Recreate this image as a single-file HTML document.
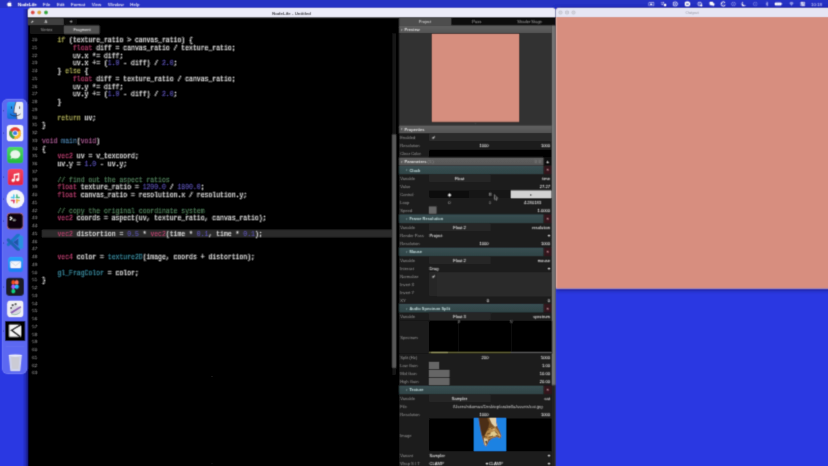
<!DOCTYPE html>
<html><head><meta charset="utf-8"><title>NodeLife</title>
<style>
html,body{margin:0;padding:0;}
html{width:828px;height:466px;overflow:hidden;background:#2b38e2;}
body{width:828px;height:466px;overflow:hidden;background:#2b38e2;position:relative;font-family:"Liberation Sans",sans-serif;}
#clip{position:absolute;left:0;top:0;width:828px;height:466px;overflow:hidden;}
#wrap{position:absolute;left:-20px;top:-20px;width:868px;height:506px;overflow:hidden;background:#2b38e2;filter:url(#cm);}
#root{position:absolute;left:20px;top:20px;width:3312px;height:1864px;transform:scale(0.25);transform-origin:0 0;}
.k{color:#b9b860}.t{color:#b9426f}.v{color:#a85c92}.n{color:#5c54b2}.c{color:#578560}.f{color:#4f86b0}.b{color:#3f8fa3}.w{color:#e0e0e0}
.ln{position:absolute;left:112px;width:36.4px;text-align:right;font-family:"Liberation Sans",sans-serif;font-size:17.2px;color:#9c9c9c;height:32px;line-height:32px;}
.cl{position:absolute;left:168px;font-family:"Liberation Mono",monospace;font-size:25.8px;color:#e6e6e6;height:32px;line-height:32px;white-space:pre;-webkit-text-stroke:0.24px currentColor;}
</style></head><body><svg width="0" height="0" style="position:absolute"><defs><filter id="cm" x="0" y="0" width="100%" height="100%"><feConvolveMatrix order="3" kernelMatrix="0.0196 0.1008 0.0196 0.1008 0.5184 0.1008 0.0196 0.1008 0.0196" edgeMode="duplicate" preserveAlpha="true"/></filter></defs></svg><div id="clip"><div id="wrap"><div id="root">

<div style="position:absolute;left:-80px;top:-80px;width:3472px;height:112.4px;background:#2530c4;"></div>
<svg style="position:absolute;left:28px;top:4.8px" width="20" height="22.4" viewBox="0 0 10 12"><path d="M7 3.2c-1 0-1.4.5-2.1.5S3.700 3.200 2.900 3.200C1.600 3.200.3 4.400.3 6.500.3 8.700 1.800 11.300 3 11.300c.7 0 .9-.45 1.900-.45s1.100.45 1.900.45c1.200 0 2.400-2.200 2.700-3.300-1.700-.7-1.900-3.200-.1-4C8.800 3.400 7.800 3.200 7 3.200zM6.700.2C5.600.3 4.600 1.400 4.800 2.700 5.900 2.700 6.900 1.600 6.700.2z" fill="#fff"/></svg>
<div style="position:absolute;left:72px;top:-1.6px;height:40px;line-height:40px;font-family:'Liberation Sans', sans-serif;font-size:17.6px;color:#fff;font-weight:bold;white-space:pre;">NodeLife</div>
<div style="position:absolute;left:172px;top:-1.6px;height:40px;line-height:40px;font-family:'Liberation Sans', sans-serif;font-size:17.6px;color:#fff;font-weight:normal;white-space:pre;">File</div>
<div style="position:absolute;left:228px;top:-1.6px;height:40px;line-height:40px;font-family:'Liberation Sans', sans-serif;font-size:17.6px;color:#fff;font-weight:normal;white-space:pre;">Edit</div>
<div style="position:absolute;left:284px;top:-1.6px;height:40px;line-height:40px;font-family:'Liberation Sans', sans-serif;font-size:17.6px;color:#fff;font-weight:normal;white-space:pre;">Format</div>
<div style="position:absolute;left:366.8px;top:-1.6px;height:40px;line-height:40px;font-family:'Liberation Sans', sans-serif;font-size:17.6px;color:#fff;font-weight:normal;white-space:pre;">View</div>
<div style="position:absolute;left:432px;top:-1.6px;height:40px;line-height:40px;font-family:'Liberation Sans', sans-serif;font-size:17.6px;color:#fff;font-weight:normal;white-space:pre;">Window</div>
<div style="position:absolute;left:521.2px;top:-1.6px;height:40px;line-height:40px;font-family:'Liberation Sans', sans-serif;font-size:17.6px;color:#fff;font-weight:normal;white-space:pre;">Help</div>
<div style="position:absolute;right:24px;top:-1.6px;height:40px;line-height:40px;font-family:'Liberation Sans', sans-serif;font-size:17.6px;color:#d4d8fa;font-weight:normal;white-space:pre;">10:18</div>
<svg style="position:absolute;left:2592.79px;top:7.552px" width="24.816" height="17.296" viewBox="0 0 66 46"><rect x="4" y="4" width="58" height="38" rx="9" fill="none" stroke="#e8eaff" stroke-width="6"/><rect x="20" y="15" width="20" height="16" rx="3" fill="#e8eaff"/><path d="M44 23l10-7v14z" fill="#e8eaff"/></svg>
<svg style="position:absolute;left:2642.4px;top:6.2px" width="24" height="20" viewBox="0 0 60 50"><path d="M2 14h30M24 6l9 8-9 8" fill="none" stroke="#e8eaff" stroke-width="6"/><path d="M10 30h16" stroke="#e8eaff" stroke-width="6"/><rect x="36" y="26" width="20" height="20" rx="3" fill="#fff"/></svg>
<svg style="position:absolute;left:2690.4px;top:5.4px" width="21.6" height="21.6" viewBox="0 0 54 54"><circle cx="27" cy="27" r="21" fill="none" stroke="#e4e6ff" stroke-width="9"/><circle cx="27" cy="27" r="8" fill="#e4e6ff"/></svg>
<svg style="position:absolute;left:2738.8px;top:5.4px" width="21.6" height="21.6" viewBox="0 0 60 60"><circle cx="30" cy="30" r="29" fill="#fff"/><rect x="17" y="21" width="26" height="18" rx="6" fill="#2a34b8"/><rect x="23" y="26" width="14" height="8" rx="3" fill="#dfe2ff"/></svg>
<svg style="position:absolute;left:2788.84px;top:5.784px" width="22.32" height="20.832" viewBox="0 0 60 56"><circle cx="26" cy="26" r="20" fill="none" stroke="#dcdffd" stroke-width="8"/><path d="M14 26h24M26 8c-10 10-10 26 0 36" fill="none" stroke="#dcdffd" stroke-width="4"/><circle cx="44" cy="42" r="11" fill="#fff"/></svg>
<svg style="position:absolute;left:2837.2px;top:7.2px" width="21.6" height="18" viewBox="0 0 60 50"><rect x="2" y="2" width="40" height="30" rx="8" fill="#fff"/><rect x="20" y="16" width="38" height="26" rx="8" fill="#fff"/><path d="M8 30l-2 14 14-12zM48 40l6 9-14-8z" fill="#fff"/></svg>
<svg style="position:absolute;left:2882.4px;top:5px" width="22.4" height="22.4" viewBox="0 0 56 56"><path d="M44 12A22 22 0 1 0 48 38" fill="none" stroke="#fff" stroke-width="10"/><circle cx="28" cy="28" r="6" fill="#c8ccff" opacity=".5"/></svg>
<svg style="position:absolute;left:2923.6px;top:6.2px" width="20" height="20" viewBox="0 0 50 50"><circle cx="25" cy="25" r="19" fill="none" stroke="#8f97ec" stroke-width="7"/><circle cx="25" cy="25" r="6" fill="#8f97ec"/></svg>
<svg style="position:absolute;left:2965.2px;top:5.8px" width="20" height="20.8" viewBox="0 0 50 52"><path d="M20 3A23 23 0 1 0 47 34 19 19 0 0 1 20 3z" fill="#fff"/></svg>
<svg style="position:absolute;left:3010.8px;top:6.2px" width="20" height="20" viewBox="0 0 50 50"><circle cx="25" cy="25" r="19" fill="none" stroke="#7f88e6" stroke-width="6"/><circle cx="25" cy="25" r="5" fill="#7f88e6"/></svg>
<svg style="position:absolute;left:3062.8px;top:5.4px" width="10.4" height="21.6" viewBox="0 0 26 54"><path d="M3 15l20 24-10 10V5l10 10L3 39" fill="none" stroke="#c4c8fa" stroke-width="5"/></svg>
<svg style="position:absolute;left:3099.2px;top:9.4px" width="30.4" height="13.6" viewBox="0 0 76 34"><rect x="2" y="2" width="64" height="30" rx="9" fill="#fff"/><rect x="69" y="11" width="5" height="12" rx="2" fill="#e0e3ff"/><path d="M24 4v26M45 4v26" stroke="#aeb5f4" stroke-width="4"/></svg>
<svg style="position:absolute;left:3156.4px;top:8.2px" width="20" height="16" viewBox="0 0 50 40"><path d="M25 38L4 10a32 32 0 0 1 42 0z" fill="#8d96ea"/></svg>
<svg style="position:absolute;left:3200.5px;top:8.104px" width="19.008" height="16.192" viewBox="0 0 54 46"><rect x="2" y="2" width="50" height="18" rx="6" fill="#fff"/><rect x="2" y="26" width="50" height="18" rx="6" fill="#fff"/><circle cx="40" cy="11" r="5" fill="#2a34b8"/><circle cx="14" cy="35" r="5" fill="#2a34b8"/></svg>
<div style="position:absolute;left:90px;top:36px;width:22.4px;height:1840px;background:linear-gradient(to right,rgba(0,0,40,0),rgba(0,0,40,.18) 45%,rgba(0,0,40,.55));"></div>
<div style="position:absolute;left:8px;top:396px;width:100.8px;height:1100px;background:#5b67f2;border-radius:24px;box-shadow:inset 0 0 0 1.6px rgba(160,170,255,.6);"></div>
<div style="position:absolute;left:2224px;top:32.4px;width:1176px;height:1121.2px;background:#d78e7f;border-radius:10px 10px 6px 6px;overflow:hidden;box-shadow:0 6px 16px rgba(0,0,60,.55);"><div style="position:absolute;left:0px;top:0px;width:1176px;height:35.6px;background:#e6e6f4;"></div></div>
<div style="position:absolute;left:2233.6px;top:42.4px;width:16px;height:16px;background:#d2d2dc;border-radius:50%;box-shadow:inset 0 0 0 1.6px #b4b4c2;"></div>
<div style="position:absolute;left:2260px;top:42.4px;width:16px;height:16px;background:#d2d2dc;border-radius:50%;box-shadow:inset 0 0 0 1.6px #b4b4c2;"></div>
<div style="position:absolute;left:2286px;top:42.4px;width:16px;height:16px;background:#d2d2dc;border-radius:50%;box-shadow:inset 0 0 0 1.6px #b4b4c2;"></div>
<div style="position:absolute;left:2368px;width:800px;text-align:center;top:30.8px;height:40px;line-height:40px;font-family:'Liberation Sans', sans-serif;font-size:17.6px;color:#9898a4;font-weight:normal;white-space:pre;">Output</div>
<div style="position:absolute;left:2224px;top:68px;width:2.8px;height:1085.6px;background:rgba(255,235,230,.45);"></div>
<div style="position:absolute;left:2224px;top:1151.6px;width:1096px;height:2.4px;background:rgba(255,240,240,.55);"></div>
<div style="position:absolute;left:112px;top:32.4px;width:2109.6px;height:1840px;background:#000;border-radius:10px 10px 0 0;overflow:hidden;"><div style="position:absolute;left:0px;top:0px;width:2112px;height:36.4px;background:#ececf8;"></div></div>
<div style="position:absolute;left:122.8px;top:42.4px;width:16px;height:16px;background:#dc4a40;border-radius:50%;"></div>
<div style="position:absolute;left:149.2px;top:42.4px;width:16px;height:16px;background:#dba430;border-radius:50%;"></div>
<div style="position:absolute;left:175.6px;top:42.4px;width:16px;height:16px;background:#2fa83a;border-radius:50%;"></div>
<div style="position:absolute;left:766px;width:800px;text-align:center;top:32.4px;height:40px;line-height:40px;font-family:'Liberation Sans', sans-serif;font-size:17.6px;color:#303036;font-weight:bold;white-space:pre;">NodeLife - Untitled</div>
<div style="position:absolute;left:112px;top:72.8px;width:143.2px;height:26.8px;background:#404040;"></div>
<div style="position:absolute;left:260px;top:72.8px;width:46.8px;height:26.8px;background:#101010;"></div>
<div style="position:absolute;left:-216px;width:800px;text-align:center;top:66.8px;height:40px;line-height:40px;font-family:'Liberation Sans', sans-serif;font-size:16.8px;color:#d0d0d0;font-weight:normal;white-space:pre;">A</div>
<div style="position:absolute;left:124px;top:85.2px;width:10.4px;height:3.6px;background:#c8c8c8;transform:rotate(-45deg);border-radius:1.2px;"></div>
<div style="position:absolute;left:-116px;width:800px;text-align:center;top:66.4px;height:40px;line-height:40px;font-family:'Liberation Sans', sans-serif;font-size:18.4px;color:#ccc;font-weight:normal;white-space:pre;">+</div>
<div style="position:absolute;left:120px;top:101.6px;width:134.8px;height:33.6px;background:#181818;"></div>
<div style="position:absolute;left:256px;top:101.6px;width:142.4px;height:33.6px;background:#515151;"></div>
<div style="position:absolute;left:-214px;width:800px;text-align:center;top:99.6px;height:40px;line-height:40px;font-family:'Liberation Sans', sans-serif;font-size:16px;color:#9a9a9a;font-weight:normal;white-space:pre;">Vertex</div>
<div style="position:absolute;left:-72px;width:800px;text-align:center;top:99.6px;height:40px;line-height:40px;font-family:'Liberation Sans', sans-serif;font-size:16px;color:#e8e8e8;font-weight:normal;white-space:pre;">Fragment</div>
<div style="position:absolute;left:168px;top:918.8px;width:1400px;height:31.6px;background:#2b2b2b;"></div>
<div class="ln" style="top:141.60px">20</div>
<div class="cl" style="top:145.60px">    <span class="k">if</span> (texture_ratio &gt; canvas_ratio) {</div>
<div class="ln" style="top:172.60px">21</div>
<div class="cl" style="top:176.60px">        <span class="t">float</span> diff = canvas_ratio / texture_ratio;</div>
<div class="ln" style="top:203.60px">22</div>
<div class="cl" style="top:207.60px">        uv.x *= diff;</div>
<div class="ln" style="top:234.60px">23</div>
<div class="cl" style="top:238.60px">        uv.x += (<span class="n">1.0</span> - diff) / <span class="n">2.0</span>;</div>
<div class="ln" style="top:265.60px">24</div>
<div class="cl" style="top:269.60px">    } <span class="k">else</span> {</div>
<div class="ln" style="top:296.60px">25</div>
<div class="cl" style="top:300.60px">        <span class="t">float</span> diff = texture_ratio / canvas_ratio;</div>
<div class="ln" style="top:327.60px">26</div>
<div class="cl" style="top:331.60px">        uv.y *= diff;</div>
<div class="ln" style="top:358.60px">27</div>
<div class="cl" style="top:362.60px">        uv.y += (<span class="n">1.0</span> - diff) / <span class="n">2.0</span>;</div>
<div class="ln" style="top:389.60px">28</div>
<div class="cl" style="top:393.60px">    }</div>
<div class="ln" style="top:420.60px">29</div>
<div class="ln" style="top:451.60px">30</div>
<div class="cl" style="top:455.60px">    <span class="k">return</span> uv;</div>
<div class="ln" style="top:482.60px">31</div>
<div class="cl" style="top:486.60px">}</div>
<div class="ln" style="top:513.60px">32</div>
<div class="ln" style="top:544.60px">33</div>
<div class="cl" style="top:548.60px"><span class="v">void</span> <span class="f">main</span>(<span class="v">void</span>)</div>
<div class="ln" style="top:575.60px">34</div>
<div class="cl" style="top:579.60px">{</div>
<div class="ln" style="top:606.60px">35</div>
<div class="cl" style="top:610.60px">    <span class="t">vec2</span> uv = v_texcoord;</div>
<div class="ln" style="top:637.60px">36</div>
<div class="cl" style="top:641.60px">    uv.y = <span class="n">1.0</span> - uv.y;</div>
<div class="ln" style="top:668.60px">37</div>
<div class="ln" style="top:699.60px">38</div>
<div class="cl" style="top:703.60px">    <span class="c">// find out the aspect ratios</span></div>
<div class="ln" style="top:730.60px">39</div>
<div class="cl" style="top:734.60px">    <span class="t">float</span> texture_ratio = <span class="n">1200.0</span> / <span class="n">1800.0</span>;</div>
<div class="ln" style="top:761.60px">40</div>
<div class="cl" style="top:765.60px">    <span class="t">float</span> canvas_ratio = resolution.x / resolution.y;</div>
<div class="ln" style="top:792.60px">41</div>
<div class="ln" style="top:823.60px">42</div>
<div class="cl" style="top:827.60px">    <span class="c">// copy the original coordinate system</span></div>
<div class="ln" style="top:854.60px">43</div>
<div class="cl" style="top:858.60px">    <span class="t">vec2</span> coords = aspect(uv, texture_ratio, canvas_ratio);</div>
<div class="ln" style="top:885.60px">44</div>
<div class="ln" style="top:916.60px">45</div>
<div class="cl" style="top:920.60px">    <span class="t">vec2</span> distortion = <span class="n">0.5</span> * <span class="t">vec2</span>(time * <span class="n">0.1</span>, time * <span class="n">0.1</span>);</div>
<div class="ln" style="top:947.60px">46</div>
<div class="ln" style="top:978.60px">47</div>
<div class="ln" style="top:1009.60px">48</div>
<div class="cl" style="top:1013.60px">    <span class="t">vec4</span> color = <span class="b">texture2D</span>(image, coords + distortion);</div>
<div class="ln" style="top:1040.60px">49</div>
<div class="ln" style="top:1071.60px">50</div>
<div class="cl" style="top:1075.60px">    <span class="b">gl_FragColor</span> = color;</div>
<div class="ln" style="top:1102.60px">51</div>
<div class="cl" style="top:1106.60px">}</div>
<div class="ln" style="top:1133.60px">52</div>
<div class="ln" style="top:1164.60px">53</div>
<div class="ln" style="top:1195.60px">54</div>
<div class="ln" style="top:1226.60px">55</div>
<div class="ln" style="top:1257.60px">56</div>
<div class="ln" style="top:1288.60px">57</div>
<div class="ln" style="top:1319.60px">58</div>
<div class="ln" style="top:1350.60px">59</div>
<div class="ln" style="top:1381.60px">60</div>
<div class="ln" style="top:1412.60px">61</div>
<div class="ln" style="top:1443.60px">62</div>
<div class="ln" style="top:1474.60px">63</div>
<div style="position:absolute;left:845.6px;top:1504.4px;width:4px;height:4px;background:#4a4a4a;border-radius:50%;"></div>
<div style="position:absolute;left:845.6px;top:1852px;width:4px;height:4px;background:#3a3a3a;border-radius:50%;"></div>
<div style="position:absolute;left:1899.2px;top:492.8px;width:4.8px;height:4px;background:#4c4c4c;border-radius:50%;"></div>
<div style="position:absolute;left:1568.8px;top:134px;width:14.8px;height:1366px;background:#161616;"></div>
<div style="position:absolute;left:1568.8px;top:538px;width:14.8px;height:932.8px;background:#585858;"></div>
<div style="position:absolute;left:1596.8px;top:70px;width:624.8px;height:1796px;background:#1b1b1b;"></div>
<div style="position:absolute;left:1596.8px;top:70px;width:625.6px;height:31.6px;background:#111;"></div>
<div style="position:absolute;left:1596.8px;top:70px;width:208px;height:31.6px;background:#4d4d4d;"></div>
<div style="position:absolute;left:1300px;width:800px;text-align:center;top:65.6px;height:40px;line-height:40px;font-family:'Liberation Sans', sans-serif;font-size:16px;color:#d8d8d8;font-weight:normal;white-space:pre;">Project</div>
<div style="position:absolute;left:1507.2px;width:800px;text-align:center;top:65.6px;height:40px;line-height:40px;font-family:'Liberation Sans', sans-serif;font-size:16px;color:#9a9a9a;font-weight:normal;white-space:pre;">Pass</div>
<div style="position:absolute;left:1718.4px;width:800px;text-align:center;top:65.6px;height:40px;line-height:40px;font-family:'Liberation Sans', sans-serif;font-size:16px;color:#9a9a9a;font-weight:normal;white-space:pre;">Shader Stage</div>
<div style="position:absolute;left:2207.2px;top:101.6px;width:14.8px;height:1764px;background:#242424;"></div>
<div style="position:absolute;left:2207.2px;top:101.6px;width:14.8px;height:1438.4px;background:#747474;"></div>
<div style="position:absolute;left:1596.8px;top:102.4px;width:610px;height:30px;background:linear-gradient(#606060,#555);"></div>
<div style="position:absolute;left:1604px;top:97.8px;height:40px;line-height:40px;font-family:'Liberation Sans', sans-serif;font-size:12.8px;color:#bbb;font-weight:normal;white-space:pre;">&#9662;</div>
<div style="position:absolute;left:1618.4px;top:97.8px;height:40px;line-height:40px;font-family:'Liberation Sans', sans-serif;font-size:16px;color:#d6d6d6;font-weight:bold;white-space:pre;">Preview</div>
<div style="position:absolute;left:1596.8px;top:132.8px;width:610px;height:368.8px;background:#323232;"></div>
<div style="position:absolute;left:1727.6px;top:136px;width:348.4px;height:350.8px;background:#d68e7e;"></div>
<div style="position:absolute;left:1596.8px;top:501.6px;width:610px;height:30.8px;background:linear-gradient(#606060,#555);"></div>
<div style="position:absolute;left:1604px;top:497.4px;height:40px;line-height:40px;font-family:'Liberation Sans', sans-serif;font-size:12.8px;color:#bbb;font-weight:normal;white-space:pre;">&#9662;</div>
<div style="position:absolute;left:1618.4px;top:497.4px;height:40px;line-height:40px;font-family:'Liberation Sans', sans-serif;font-size:16px;color:#d6d6d6;font-weight:bold;white-space:pre;">Properties</div>
<div style="position:absolute;left:1596.8px;top:534px;width:119.2px;height:30.8px;background:#1d1d1d;"></div>
<div style="position:absolute;left:1716px;top:534px;width:490.8px;height:30.8px;background:#2b2b2b;"></div>
<div style="position:absolute;left:1600.8px;top:529.8px;height:40px;line-height:40px;font-family:'Liberation Sans', sans-serif;font-size:16.4px;color:#8e8e8e;font-weight:normal;white-space:pre;">Enabled</div>
<div style="position:absolute;left:1333.6px;width:800px;text-align:center;top:529.8px;height:40px;line-height:40px;font-family:'Liberation Sans', sans-serif;font-size:16.4px;color:#fff;font-weight:normal;white-space:pre;">&#10004;</div>
<div style="position:absolute;left:1596.8px;top:566.4px;width:119.2px;height:30.8px;background:#1d1d1d;"></div>
<div style="position:absolute;left:1716px;top:566.4px;width:490.8px;height:30.8px;background:#1b1b1b;"></div>
<div style="position:absolute;left:1600.8px;top:562.2px;height:40px;line-height:40px;font-family:'Liberation Sans', sans-serif;font-size:16.4px;color:#8e8e8e;font-weight:normal;white-space:pre;">Resolution</div>
<div style="position:absolute;left:1536px;width:800px;text-align:center;top:562.2px;height:40px;line-height:40px;font-family:'Liberation Sans', sans-serif;font-size:16.4px;color:#ececec;font-weight:normal;white-space:pre;">1000</div>
<div style="position:absolute;right:1112px;top:562.2px;height:40px;line-height:40px;font-family:'Liberation Sans', sans-serif;font-size:16.4px;color:#ececec;font-weight:normal;white-space:pre;">1000</div>
<div style="position:absolute;left:1596.8px;top:598.8px;width:119.2px;height:30.8px;background:#1d1d1d;"></div>
<div style="position:absolute;left:1716px;top:598.8px;width:490.8px;height:30.8px;background:#000;"></div>
<div style="position:absolute;left:1600.8px;top:594.6px;height:40px;line-height:40px;font-family:'Liberation Sans', sans-serif;font-size:16.4px;color:#8e8e8e;font-weight:normal;white-space:pre;">Clear Color</div>
<div style="position:absolute;left:1596.8px;top:630.8px;width:577.6px;height:31.2px;background:linear-gradient(#606060,#555);"></div>
<div style="position:absolute;left:1604px;top:626.8px;height:40px;line-height:40px;font-family:'Liberation Sans', sans-serif;font-size:12.8px;color:#bbb;font-weight:normal;white-space:pre;">&#9662;</div>
<div style="position:absolute;left:1618.4px;top:626.8px;height:40px;line-height:40px;font-family:'Liberation Sans', sans-serif;font-size:16px;color:#d6d6d6;font-weight:bold;white-space:pre;">Parameters</div>
<div style="position:absolute;left:1710px;top:626.8px;height:40px;line-height:40px;font-family:'Liberation Sans', sans-serif;font-size:13.6px;color:#999;font-weight:normal;white-space:pre;">( 5 )</div>
<div style="position:absolute;left:2175.2px;top:630.8px;width:31.6px;height:31.2px;background:#0c0c0c;"></div>
<div style="position:absolute;left:1790.8px;width:800px;text-align:center;top:626.4px;height:40px;line-height:40px;font-family:'Liberation Sans', sans-serif;font-size:16.8px;color:#f4f4f4;font-weight:bold;white-space:pre;">+</div>
<div style="position:absolute;left:2138px;top:639.2px;width:10.4px;height:13.6px;background:#6a6a6a;"></div>
<div style="position:absolute;left:2154.4px;top:639.2px;width:10.4px;height:13.6px;background:#6a6a6a;"></div>
<div style="position:absolute;left:1596.8px;top:663.6px;width:577.6px;height:33.6px;background:linear-gradient(#3a5053,#2e4346);"></div>
<div style="position:absolute;left:2175.2px;top:663.6px;width:31.6px;height:33.6px;background:#33181f;"></div>
<div style="position:absolute;left:1790.8px;width:800px;text-align:center;top:660.4px;height:40px;line-height:40px;font-family:'Liberation Sans', sans-serif;font-size:16px;color:#d3949c;font-weight:bold;white-space:pre;">&#215;</div>
<div style="position:absolute;left:1624px;top:660.8px;height:40px;line-height:40px;font-family:'Liberation Sans', sans-serif;font-size:12px;color:#7f9a9a;font-weight:normal;white-space:pre;">&#9662;</div>
<div style="position:absolute;left:1637.6px;top:660.8px;height:40px;line-height:40px;font-family:'Liberation Sans', sans-serif;font-size:16px;color:#b8d0d0;font-weight:bold;white-space:pre;">Clock</div>
<div style="position:absolute;left:1596.8px;top:696.8px;width:119.2px;height:30.8px;background:#1d1d1d;"></div>
<div style="position:absolute;left:1716px;top:696.8px;width:490.8px;height:30.8px;background:#1b1b1b;"></div>
<div style="position:absolute;left:1600.8px;top:692.6px;height:40px;line-height:40px;font-family:'Liberation Sans', sans-serif;font-size:16.4px;color:#8e8e8e;font-weight:normal;white-space:pre;">Variable</div>
<div style="position:absolute;left:1716px;top:696.8px;width:246.4px;height:30.8px;background:#272727;"></div>
<div style="position:absolute;left:1438px;width:800px;text-align:center;top:692.6px;height:40px;line-height:40px;font-family:'Liberation Sans', sans-serif;font-size:16.4px;color:#ececec;font-weight:normal;white-space:pre;">Float</div>
<div style="position:absolute;right:1112px;top:692.6px;height:40px;line-height:40px;font-family:'Liberation Sans', sans-serif;font-size:16.4px;color:#ececec;font-weight:normal;white-space:pre;">time</div>
<div style="position:absolute;left:1596.8px;top:729.2px;width:119.2px;height:30.8px;background:#1d1d1d;"></div>
<div style="position:absolute;left:1716px;top:729.2px;width:490.8px;height:30.8px;background:#1b1b1b;"></div>
<div style="position:absolute;left:1600.8px;top:725px;height:40px;line-height:40px;font-family:'Liberation Sans', sans-serif;font-size:16.4px;color:#8e8e8e;font-weight:normal;white-space:pre;">Value</div>
<div style="position:absolute;right:1112px;top:725px;height:40px;line-height:40px;font-family:'Liberation Sans', sans-serif;font-size:16.4px;color:#ececec;font-weight:normal;white-space:pre;">27.27</div>
<div style="position:absolute;left:1596.8px;top:761.2px;width:119.2px;height:30.8px;background:#1d1d1d;"></div>
<div style="position:absolute;left:1716px;top:761.2px;width:490.8px;height:30.8px;background:#1b1b1b;"></div>
<div style="position:absolute;left:1600.8px;top:757px;height:40px;line-height:40px;font-family:'Liberation Sans', sans-serif;font-size:16.4px;color:#8e8e8e;font-weight:normal;white-space:pre;">Control</div>
<div style="position:absolute;left:1716px;top:762px;width:161.2px;height:29.6px;background:#111;"></div>
<div style="position:absolute;left:1880px;top:762px;width:161.2px;height:29.6px;background:#161616;"></div>
<div style="position:absolute;left:2043.6px;top:762px;width:162.4px;height:29.6px;background:#d2d2d2;"></div>
<div style="position:absolute;left:1398px;width:800px;text-align:center;top:757px;height:40px;line-height:40px;font-family:'Liberation Sans', sans-serif;font-size:16.4px;color:#eee;font-weight:normal;white-space:pre;">&#9670;</div>
<div style="position:absolute;left:1958.4px;top:771.2px;width:2.2px;height:12px;background:#bbb;"></div>
<div style="position:absolute;left:1962.8px;top:771.2px;width:2.2px;height:12px;background:#bbb;"></div>
<div style="position:absolute;left:1724px;width:800px;text-align:center;top:757px;height:40px;line-height:40px;font-family:'Liberation Sans', sans-serif;font-size:16.4px;color:#333;font-weight:normal;white-space:pre;">&#9656;</div>
<div style="position:absolute;left:1596.8px;top:793.2px;width:119.2px;height:30.8px;background:#1d1d1d;"></div>
<div style="position:absolute;left:1716px;top:793.2px;width:490.8px;height:30.8px;background:#1b1b1b;"></div>
<div style="position:absolute;left:1600.8px;top:789px;height:40px;line-height:40px;font-family:'Liberation Sans', sans-serif;font-size:16.4px;color:#8e8e8e;font-weight:normal;white-space:pre;">Loop</div>
<div style="position:absolute;left:1398px;width:800px;text-align:center;top:789px;height:40px;line-height:40px;font-family:'Liberation Sans', sans-serif;font-size:16.4px;color:#aaa;font-weight:normal;white-space:pre;">0</div>
<div style="position:absolute;left:1560px;width:800px;text-align:center;top:789px;height:40px;line-height:40px;font-family:'Liberation Sans', sans-serif;font-size:16.4px;color:#888;font-weight:normal;white-space:pre;">0</div>
<div style="position:absolute;right:1148px;top:789px;height:40px;line-height:40px;font-family:'Liberation Sans', sans-serif;font-size:16.4px;color:#ececec;font-weight:normal;white-space:pre;">4.280183</div>
<div style="position:absolute;left:1596.8px;top:825.2px;width:119.2px;height:30.8px;background:#1d1d1d;"></div>
<div style="position:absolute;left:1716px;top:825.2px;width:490.8px;height:30.8px;background:#1b1b1b;"></div>
<div style="position:absolute;left:1600.8px;top:821px;height:40px;line-height:40px;font-family:'Liberation Sans', sans-serif;font-size:16.4px;color:#8e8e8e;font-weight:normal;white-space:pre;">Speed</div>
<div style="position:absolute;left:1716px;top:826.4px;width:30.4px;height:28.8px;background:#666;"></div>
<div style="position:absolute;right:1112px;top:821px;height:40px;line-height:40px;font-family:'Liberation Sans', sans-serif;font-size:16.4px;color:#ececec;font-weight:normal;white-space:pre;">1.0000</div>
<div style="position:absolute;left:1596.8px;top:858.4px;width:577.6px;height:33.6px;background:linear-gradient(#3a5053,#2e4346);"></div>
<div style="position:absolute;left:2175.2px;top:858.4px;width:31.6px;height:33.6px;background:#33181f;"></div>
<div style="position:absolute;left:1790.8px;width:800px;text-align:center;top:855.2px;height:40px;line-height:40px;font-family:'Liberation Sans', sans-serif;font-size:16px;color:#d3949c;font-weight:bold;white-space:pre;">&#215;</div>
<div style="position:absolute;left:1624px;top:855.6px;height:40px;line-height:40px;font-family:'Liberation Sans', sans-serif;font-size:12px;color:#7f9a9a;font-weight:normal;white-space:pre;">&#9662;</div>
<div style="position:absolute;left:1637.6px;top:855.6px;height:40px;line-height:40px;font-family:'Liberation Sans', sans-serif;font-size:16px;color:#b8d0d0;font-weight:bold;white-space:pre;">Frame Resolution</div>
<div style="position:absolute;left:1596.8px;top:893.2px;width:119.2px;height:30.8px;background:#1d1d1d;"></div>
<div style="position:absolute;left:1716px;top:893.2px;width:490.8px;height:30.8px;background:#1b1b1b;"></div>
<div style="position:absolute;left:1600.8px;top:889px;height:40px;line-height:40px;font-family:'Liberation Sans', sans-serif;font-size:16.4px;color:#8e8e8e;font-weight:normal;white-space:pre;">Variable</div>
<div style="position:absolute;left:1716px;top:893.2px;width:246.4px;height:30.8px;background:#272727;"></div>
<div style="position:absolute;left:1438px;width:800px;text-align:center;top:889px;height:40px;line-height:40px;font-family:'Liberation Sans', sans-serif;font-size:16.4px;color:#ececec;font-weight:normal;white-space:pre;">Float 2</div>
<div style="position:absolute;right:1112px;top:889px;height:40px;line-height:40px;font-family:'Liberation Sans', sans-serif;font-size:16.4px;color:#ececec;font-weight:normal;white-space:pre;">resolution</div>
<div style="position:absolute;left:1596.8px;top:925.6px;width:119.2px;height:30.8px;background:#1d1d1d;"></div>
<div style="position:absolute;left:1716px;top:925.6px;width:490.8px;height:30.8px;background:#1b1b1b;"></div>
<div style="position:absolute;left:1600.8px;top:921.4px;height:40px;line-height:40px;font-family:'Liberation Sans', sans-serif;font-size:16.4px;color:#8e8e8e;font-weight:normal;white-space:pre;">Render Pass</div>
<div style="position:absolute;left:1718.4px;top:921.4px;height:40px;line-height:40px;font-family:'Liberation Sans', sans-serif;font-size:16.4px;color:#ececec;font-weight:normal;white-space:pre;">Project</div>
<div style="position:absolute;left:1795.2px;width:800px;text-align:center;top:921.4px;height:40px;line-height:40px;font-family:'Liberation Sans', sans-serif;font-size:16px;color:#ddd;font-weight:normal;white-space:pre;">&#9662;</div>
<div style="position:absolute;left:1596.8px;top:957.6px;width:119.2px;height:30.8px;background:#1d1d1d;"></div>
<div style="position:absolute;left:1716px;top:957.6px;width:490.8px;height:30.8px;background:#1b1b1b;"></div>
<div style="position:absolute;left:1600.8px;top:953.4px;height:40px;line-height:40px;font-family:'Liberation Sans', sans-serif;font-size:16.4px;color:#8e8e8e;font-weight:normal;white-space:pre;">Resolution</div>
<div style="position:absolute;left:1536px;width:800px;text-align:center;top:953.4px;height:40px;line-height:40px;font-family:'Liberation Sans', sans-serif;font-size:16.4px;color:#ececec;font-weight:normal;white-space:pre;">1000</div>
<div style="position:absolute;right:1112px;top:953.4px;height:40px;line-height:40px;font-family:'Liberation Sans', sans-serif;font-size:16.4px;color:#ececec;font-weight:normal;white-space:pre;">1000</div>
<div style="position:absolute;left:1596.8px;top:990.8px;width:577.6px;height:33.6px;background:linear-gradient(#3a5053,#2e4346);"></div>
<div style="position:absolute;left:2175.2px;top:990.8px;width:31.6px;height:33.6px;background:#33181f;"></div>
<div style="position:absolute;left:1790.8px;width:800px;text-align:center;top:987.6px;height:40px;line-height:40px;font-family:'Liberation Sans', sans-serif;font-size:16px;color:#d3949c;font-weight:bold;white-space:pre;">&#215;</div>
<div style="position:absolute;left:1624px;top:988px;height:40px;line-height:40px;font-family:'Liberation Sans', sans-serif;font-size:12px;color:#7f9a9a;font-weight:normal;white-space:pre;">&#9662;</div>
<div style="position:absolute;left:1637.6px;top:988px;height:40px;line-height:40px;font-family:'Liberation Sans', sans-serif;font-size:16px;color:#b8d0d0;font-weight:bold;white-space:pre;">Mouse</div>
<div style="position:absolute;left:1596.8px;top:1024.8px;width:119.2px;height:30.8px;background:#1d1d1d;"></div>
<div style="position:absolute;left:1716px;top:1024.8px;width:490.8px;height:30.8px;background:#1b1b1b;"></div>
<div style="position:absolute;left:1600.8px;top:1020.6px;height:40px;line-height:40px;font-family:'Liberation Sans', sans-serif;font-size:16.4px;color:#8e8e8e;font-weight:normal;white-space:pre;">Variable</div>
<div style="position:absolute;left:1716px;top:1024.8px;width:246.4px;height:30.8px;background:#272727;"></div>
<div style="position:absolute;left:1438px;width:800px;text-align:center;top:1020.6px;height:40px;line-height:40px;font-family:'Liberation Sans', sans-serif;font-size:16.4px;color:#ececec;font-weight:normal;white-space:pre;">Float 2</div>
<div style="position:absolute;right:1112px;top:1020.6px;height:40px;line-height:40px;font-family:'Liberation Sans', sans-serif;font-size:16.4px;color:#ececec;font-weight:normal;white-space:pre;">mouse</div>
<div style="position:absolute;left:1596.8px;top:1057.2px;width:119.2px;height:30.8px;background:#1d1d1d;"></div>
<div style="position:absolute;left:1716px;top:1057.2px;width:490.8px;height:30.8px;background:#1b1b1b;"></div>
<div style="position:absolute;left:1600.8px;top:1053px;height:40px;line-height:40px;font-family:'Liberation Sans', sans-serif;font-size:16.4px;color:#8e8e8e;font-weight:normal;white-space:pre;">Interact</div>
<div style="position:absolute;left:1718.4px;top:1053px;height:40px;line-height:40px;font-family:'Liberation Sans', sans-serif;font-size:16.4px;color:#ececec;font-weight:normal;white-space:pre;">Drag</div>
<div style="position:absolute;left:1795.2px;width:800px;text-align:center;top:1053px;height:40px;line-height:40px;font-family:'Liberation Sans', sans-serif;font-size:16px;color:#ddd;font-weight:normal;white-space:pre;">&#9662;</div>
<div style="position:absolute;left:1596.8px;top:1089.6px;width:119.2px;height:30.8px;background:#1d1d1d;"></div>
<div style="position:absolute;left:1716px;top:1089.6px;width:490.8px;height:30.8px;background:#2c2c2c;"></div>
<div style="position:absolute;left:1600.8px;top:1085.4px;height:40px;line-height:40px;font-family:'Liberation Sans', sans-serif;font-size:16.4px;color:#8e8e8e;font-weight:normal;white-space:pre;">Normalize</div>
<div style="position:absolute;left:1333.6px;width:800px;text-align:center;top:1085.4px;height:40px;line-height:40px;font-family:'Liberation Sans', sans-serif;font-size:16.4px;color:#fff;font-weight:normal;white-space:pre;">&#10004;</div>
<div style="position:absolute;left:1596.8px;top:1121.6px;width:119.2px;height:32px;background:#1d1d1d;"></div>
<div style="position:absolute;left:1716px;top:1121.6px;width:490.8px;height:32px;background:#2c2c2c;"></div>
<div style="position:absolute;left:1600.8px;top:1118px;height:40px;line-height:40px;font-family:'Liberation Sans', sans-serif;font-size:16.4px;color:#8e8e8e;font-weight:normal;white-space:pre;">Invert X</div>
<div style="position:absolute;left:1596.8px;top:1153.6px;width:119.2px;height:32px;background:#1d1d1d;"></div>
<div style="position:absolute;left:1716px;top:1153.6px;width:490.8px;height:32px;background:#2c2c2c;"></div>
<div style="position:absolute;left:1600.8px;top:1150px;height:40px;line-height:40px;font-family:'Liberation Sans', sans-serif;font-size:16.4px;color:#8e8e8e;font-weight:normal;white-space:pre;">Invert Y</div>
<div style="position:absolute;left:1716px;top:1089.6px;width:490.8px;height:96px;background:#2c2c2c;"></div>
<div style="position:absolute;left:1716px;top:1089.6px;width:32px;height:96px;background:#252525;"></div>
<div style="position:absolute;left:1333.6px;width:800px;text-align:center;top:1085.4px;height:40px;line-height:40px;font-family:'Liberation Sans', sans-serif;font-size:16.4px;color:#fff;font-weight:normal;white-space:pre;">&#10004;</div>
<div style="position:absolute;left:1596.8px;top:1185.6px;width:119.2px;height:30.8px;background:#1d1d1d;"></div>
<div style="position:absolute;left:1716px;top:1185.6px;width:490.8px;height:30.8px;background:#1b1b1b;"></div>
<div style="position:absolute;left:1600.8px;top:1181.4px;height:40px;line-height:40px;font-family:'Liberation Sans', sans-serif;font-size:16.4px;color:#8e8e8e;font-weight:normal;white-space:pre;">XY</div>
<div style="position:absolute;left:1552px;width:800px;text-align:center;top:1181.4px;height:40px;line-height:40px;font-family:'Liberation Sans', sans-serif;font-size:16.4px;color:#ececec;font-weight:normal;white-space:pre;">0</div>
<div style="position:absolute;right:1112px;top:1181.4px;height:40px;line-height:40px;font-family:'Liberation Sans', sans-serif;font-size:16.4px;color:#ececec;font-weight:normal;white-space:pre;">0</div>
<div style="position:absolute;left:1596.8px;top:1216.4px;width:577.6px;height:33.6px;background:linear-gradient(#3a5053,#2e4346);"></div>
<div style="position:absolute;left:2175.2px;top:1216.4px;width:31.6px;height:33.6px;background:#33181f;"></div>
<div style="position:absolute;left:1790.8px;width:800px;text-align:center;top:1213.2px;height:40px;line-height:40px;font-family:'Liberation Sans', sans-serif;font-size:16px;color:#d3949c;font-weight:bold;white-space:pre;">&#215;</div>
<div style="position:absolute;left:1624px;top:1213.6px;height:40px;line-height:40px;font-family:'Liberation Sans', sans-serif;font-size:12px;color:#7f9a9a;font-weight:normal;white-space:pre;">&#9662;</div>
<div style="position:absolute;left:1637.6px;top:1213.6px;height:40px;line-height:40px;font-family:'Liberation Sans', sans-serif;font-size:16px;color:#b8d0d0;font-weight:bold;white-space:pre;">Audio Spectrum Split</div>
<div style="position:absolute;left:1596.8px;top:1250.8px;width:119.2px;height:30.8px;background:#1d1d1d;"></div>
<div style="position:absolute;left:1716px;top:1250.8px;width:490.8px;height:30.8px;background:#1b1b1b;"></div>
<div style="position:absolute;left:1600.8px;top:1246.6px;height:40px;line-height:40px;font-family:'Liberation Sans', sans-serif;font-size:16.4px;color:#8e8e8e;font-weight:normal;white-space:pre;">Variable</div>
<div style="position:absolute;left:1716px;top:1250.8px;width:246.4px;height:30.8px;background:#272727;"></div>
<div style="position:absolute;left:1438px;width:800px;text-align:center;top:1246.6px;height:40px;line-height:40px;font-family:'Liberation Sans', sans-serif;font-size:16.4px;color:#ececec;font-weight:normal;white-space:pre;">Float 3</div>
<div style="position:absolute;right:1112px;top:1246.6px;height:40px;line-height:40px;font-family:'Liberation Sans', sans-serif;font-size:16.4px;color:#ececec;font-weight:normal;white-space:pre;">spectrum</div>
<div style="position:absolute;left:1596.8px;top:1282.8px;width:119.2px;height:131.6px;background:#1d1d1d;"></div>
<div style="position:absolute;left:1716px;top:1282.8px;width:490.8px;height:131.6px;background:#000;"></div>
<div style="position:absolute;left:1600.8px;top:1329.6px;height:40px;line-height:40px;font-family:'Liberation Sans', sans-serif;font-size:16.4px;color:#8e8e8e;font-weight:normal;white-space:pre;">Spectrum</div>
<div style="position:absolute;left:1834px;top:1289.6px;width:2.8px;height:124px;background:#1a1a1a;"></div>
<div style="position:absolute;left:2043.6px;top:1289.6px;width:2.8px;height:124px;background:#1a1a1a;"></div>
<div style="position:absolute;left:1435.6px;width:800px;text-align:center;top:1270px;height:40px;line-height:40px;font-family:'Liberation Sans', sans-serif;font-size:10.4px;color:#999;font-weight:normal;white-space:pre;">M</div>
<div style="position:absolute;left:1645.2px;width:800px;text-align:center;top:1270px;height:40px;line-height:40px;font-family:'Liberation Sans', sans-serif;font-size:10.4px;color:#999;font-weight:normal;white-space:pre;">M</div>
<div style="position:absolute;left:1716px;top:1409.2px;width:328px;height:4px;background:#7c7c4a;"></div>
<div style="position:absolute;left:2044px;top:1409.2px;width:162.8px;height:4px;background:#707070;"></div>
<div style="position:absolute;left:1724px;top:1407.6px;width:68px;height:5.2px;background:#8e8e5c;border-radius:2px;"></div>
<div style="position:absolute;left:1596.8px;top:1414.4px;width:119.2px;height:30.8px;background:#1d1d1d;"></div>
<div style="position:absolute;left:1716px;top:1414.4px;width:490.8px;height:30.8px;background:#1b1b1b;"></div>
<div style="position:absolute;left:1600.8px;top:1410.2px;height:40px;line-height:40px;font-family:'Liberation Sans', sans-serif;font-size:16.4px;color:#8e8e8e;font-weight:normal;white-space:pre;">Split (Hz)</div>
<div style="position:absolute;left:1540px;width:800px;text-align:center;top:1410.2px;height:40px;line-height:40px;font-family:'Liberation Sans', sans-serif;font-size:16.4px;color:#ececec;font-weight:normal;white-space:pre;">200</div>
<div style="position:absolute;right:1112px;top:1410.2px;height:40px;line-height:40px;font-family:'Liberation Sans', sans-serif;font-size:16.4px;color:#ececec;font-weight:normal;white-space:pre;">5000</div>
<div style="position:absolute;left:1596.8px;top:1446.4px;width:119.2px;height:30.8px;background:#1d1d1d;"></div>
<div style="position:absolute;left:1716px;top:1446.4px;width:490.8px;height:30.8px;background:#1b1b1b;"></div>
<div style="position:absolute;left:1600.8px;top:1442.2px;height:40px;line-height:40px;font-family:'Liberation Sans', sans-serif;font-size:16.4px;color:#8e8e8e;font-weight:normal;white-space:pre;">Low Gain</div>
<div style="position:absolute;left:1716px;top:1448px;width:40px;height:28px;background:#666;"></div>
<div style="position:absolute;right:1112px;top:1442.2px;height:40px;line-height:40px;font-family:'Liberation Sans', sans-serif;font-size:16.4px;color:#ececec;font-weight:normal;white-space:pre;">1.00</div>
<div style="position:absolute;left:1596.8px;top:1478.4px;width:119.2px;height:30.8px;background:#1d1d1d;"></div>
<div style="position:absolute;left:1716px;top:1478.4px;width:490.8px;height:30.8px;background:#1b1b1b;"></div>
<div style="position:absolute;left:1600.8px;top:1474.2px;height:40px;line-height:40px;font-family:'Liberation Sans', sans-serif;font-size:16.4px;color:#8e8e8e;font-weight:normal;white-space:pre;">Mid Gain</div>
<div style="position:absolute;left:1716px;top:1480px;width:82.4px;height:28px;background:#666;"></div>
<div style="position:absolute;right:1112px;top:1474.2px;height:40px;line-height:40px;font-family:'Liberation Sans', sans-serif;font-size:16.4px;color:#ececec;font-weight:normal;white-space:pre;">10.00</div>
<div style="position:absolute;left:1596.8px;top:1510.4px;width:119.2px;height:30.8px;background:#1d1d1d;"></div>
<div style="position:absolute;left:1716px;top:1510.4px;width:490.8px;height:30.8px;background:#1b1b1b;"></div>
<div style="position:absolute;left:1600.8px;top:1506.2px;height:40px;line-height:40px;font-family:'Liberation Sans', sans-serif;font-size:16.4px;color:#8e8e8e;font-weight:normal;white-space:pre;">High Gain</div>
<div style="position:absolute;left:1716px;top:1512px;width:82.4px;height:28px;background:#666;"></div>
<div style="position:absolute;right:1112px;top:1506.2px;height:40px;line-height:40px;font-family:'Liberation Sans', sans-serif;font-size:16.4px;color:#ececec;font-weight:normal;white-space:pre;">20.00</div>
<div style="position:absolute;left:1596.8px;top:1543.2px;width:577.6px;height:33.6px;background:linear-gradient(#3a5053,#2e4346);"></div>
<div style="position:absolute;left:2175.2px;top:1543.2px;width:31.6px;height:33.6px;background:#33181f;"></div>
<div style="position:absolute;left:1790.8px;width:800px;text-align:center;top:1540px;height:40px;line-height:40px;font-family:'Liberation Sans', sans-serif;font-size:16px;color:#d3949c;font-weight:bold;white-space:pre;">&#215;</div>
<div style="position:absolute;left:1624px;top:1540.4px;height:40px;line-height:40px;font-family:'Liberation Sans', sans-serif;font-size:12px;color:#7f9a9a;font-weight:normal;white-space:pre;">&#9662;</div>
<div style="position:absolute;left:1637.6px;top:1540.4px;height:40px;line-height:40px;font-family:'Liberation Sans', sans-serif;font-size:16px;color:#b8d0d0;font-weight:bold;white-space:pre;">Texture</div>
<div style="position:absolute;left:1596.8px;top:1577.2px;width:119.2px;height:30.8px;background:#1d1d1d;"></div>
<div style="position:absolute;left:1716px;top:1577.2px;width:490.8px;height:30.8px;background:#1b1b1b;"></div>
<div style="position:absolute;left:1600.8px;top:1573px;height:40px;line-height:40px;font-family:'Liberation Sans', sans-serif;font-size:16.4px;color:#8e8e8e;font-weight:normal;white-space:pre;">Variable</div>
<div style="position:absolute;left:1716px;top:1577.2px;width:246.4px;height:30.8px;background:#272727;"></div>
<div style="position:absolute;left:1438px;width:800px;text-align:center;top:1573px;height:40px;line-height:40px;font-family:'Liberation Sans', sans-serif;font-size:16.4px;color:#ececec;font-weight:normal;white-space:pre;">Sampler</div>
<div style="position:absolute;right:1112px;top:1573px;height:40px;line-height:40px;font-family:'Liberation Sans', sans-serif;font-size:16.4px;color:#ececec;font-weight:normal;white-space:pre;">cat</div>
<div style="position:absolute;left:1596.8px;top:1609.6px;width:119.2px;height:30.8px;background:#1d1d1d;"></div>
<div style="position:absolute;left:1716px;top:1609.6px;width:490.8px;height:30.8px;background:#1b1b1b;"></div>
<div style="position:absolute;left:1600.8px;top:1605.4px;height:40px;line-height:40px;font-family:'Liberation Sans', sans-serif;font-size:16.4px;color:#8e8e8e;font-weight:normal;white-space:pre;">File</div>
<div style="position:absolute;left:1591.2px;width:800px;text-align:center;top:1605.4px;height:40px;line-height:40px;font-family:'Liberation Sans', sans-serif;font-size:17px;color:#c4c4c4;font-weight:normal;white-space:pre;">/Users/nikomas/Desktop/arabella/assets/cat.jpg</div>
<div style="position:absolute;left:1596.8px;top:1642px;width:119.2px;height:30.8px;background:#1d1d1d;"></div>
<div style="position:absolute;left:1716px;top:1642px;width:490.8px;height:30.8px;background:#1b1b1b;"></div>
<div style="position:absolute;left:1600.8px;top:1637.8px;height:40px;line-height:40px;font-family:'Liberation Sans', sans-serif;font-size:16.4px;color:#8e8e8e;font-weight:normal;white-space:pre;">Resolution</div>
<div style="position:absolute;left:1536px;width:800px;text-align:center;top:1637.8px;height:40px;line-height:40px;font-family:'Liberation Sans', sans-serif;font-size:16.4px;color:#ececec;font-weight:normal;white-space:pre;">1000</div>
<div style="position:absolute;right:1112px;top:1637.8px;height:40px;line-height:40px;font-family:'Liberation Sans', sans-serif;font-size:16.4px;color:#ececec;font-weight:normal;white-space:pre;">1000</div>
<div style="position:absolute;left:1596.8px;top:1673.6px;width:119.2px;height:132px;background:#1d1d1d;"></div>
<div style="position:absolute;left:1716px;top:1673.6px;width:490.8px;height:132px;background:#000;"></div>
<div style="position:absolute;left:1600.8px;top:1720px;height:40px;line-height:40px;font-family:'Liberation Sans', sans-serif;font-size:16.4px;color:#8e8e8e;font-weight:normal;white-space:pre;">Image</div>
<svg style="position:absolute;left:1894.8px;top:1672.4px" width="130.4" height="132" viewBox="0 0 362 365" preserveAspectRatio="none"><rect width="362" height="365" fill="#1c82e2"/><path d="M52 0L247 0 247 45 262 95 287 145 307 195 296 228 258 210 205 226 170 255 142 312 120 302 98 235 77 155 60 60Z" fill="#7a5226"/><path d="M56 0L150 0 172 55 160 120 130 185 96 205 74 120Z" fill="#4c2f14"/><path d="M172 0L247 0 247 45 258 85 236 100 200 62Z" fill="#e2d2ac"/><path d="M160 120L232 92 275 150 300 200 288 222 255 204 205 218 160 238 118 228 128 182Z" fill="#b98a48"/><path d="M190 160L236 142 262 182 228 198 182 206Z" fill="#e3cc8c"/><path d="M112 222L160 238 138 306 122 298Z" fill="#dccaa0"/><path d="M128 255L150 252 138 300Z" fill="#3a2210"/><g stroke="#5a3a18" stroke-width="9" stroke-linecap="round" fill="none"><path d="M140 140l28-12"/><path d="M196 116l30-12"/><path d="M150 178l30-10"/><path d="M236 150l24 20"/><path d="M170 214l40-14"/><path d="M252 196l28 10"/><path d="M120 205l24 6"/></g><g stroke="#e8d9a8" stroke-width="7" stroke-linecap="round" fill="none"><path d="M168 196l26-8"/><path d="M214 132l16-6"/><path d="M278 176l14 22"/></g></svg>
<svg style="position:absolute;left:1976px;top:777.6px" width="17.2" height="25.6" viewBox="0 0 50 72"><path d="M5 4v52l12-11 9 21 9-4-9-20h17z" fill="#111" stroke="#e8e8e8" stroke-width="5" stroke-linejoin="round"/></svg>
<div style="position:absolute;left:1899.2px;top:492.8px;width:4.8px;height:4px;background:#4c4c4c;border-radius:50%;"></div>
<div style="position:absolute;left:1596.8px;top:1806.4px;width:119.2px;height:30.8px;background:#1d1d1d;"></div>
<div style="position:absolute;left:1716px;top:1806.4px;width:490.8px;height:30.8px;background:#1b1b1b;"></div>
<div style="position:absolute;left:1600.8px;top:1802.2px;height:40px;line-height:40px;font-family:'Liberation Sans', sans-serif;font-size:16.4px;color:#8e8e8e;font-weight:normal;white-space:pre;">Variant</div>
<div style="position:absolute;left:1718.4px;top:1802.2px;height:40px;line-height:40px;font-family:'Liberation Sans', sans-serif;font-size:16.4px;color:#ececec;font-weight:normal;white-space:pre;">Sampler</div>
<div style="position:absolute;left:1795.2px;width:800px;text-align:center;top:1802.2px;height:40px;line-height:40px;font-family:'Liberation Sans', sans-serif;font-size:16px;color:#ddd;font-weight:normal;white-space:pre;">&#9662;</div>
<div style="position:absolute;left:1596.8px;top:1838.4px;width:119.2px;height:30.8px;background:#1d1d1d;"></div>
<div style="position:absolute;left:1716px;top:1838.4px;width:490.8px;height:30.8px;background:#1b1b1b;"></div>
<div style="position:absolute;left:1600.8px;top:1834.2px;height:40px;line-height:40px;font-family:'Liberation Sans', sans-serif;font-size:16.4px;color:#8e8e8e;font-weight:normal;white-space:pre;">Wrap S / T</div>
<div style="position:absolute;left:1718.4px;top:1834.2px;height:40px;line-height:40px;font-family:'Liberation Sans', sans-serif;font-size:16.4px;color:#ececec;font-weight:normal;white-space:pre;">CLAMP</div>
<div style="position:absolute;left:1942px;top:1834.2px;height:40px;line-height:40px;font-family:'Liberation Sans', sans-serif;font-size:16.4px;color:#ececec;font-weight:normal;white-space:pre;">&#9662; CLAMP</div>
<div style="position:absolute;left:1795.2px;width:800px;text-align:center;top:1834.2px;height:40px;line-height:40px;font-family:'Liberation Sans', sans-serif;font-size:16px;color:#ddd;font-weight:normal;white-space:pre;">&#9662;</div>
<svg style="position:absolute;left:27.2px;top:407.2px" width="67.2" height="71.2" viewBox="0 0 34 36"><defs><clipPath id="fc"><rect x="0" y="0" width="34" height="36" rx="7"/></clipPath><linearGradient id="fg" x1="0" y1="0" x2="0" y2="1"><stop offset="0" stop-color="#2fa0f4"/><stop offset="1" stop-color="#1668d8"/></linearGradient></defs>
<g clip-path="url(#fc)"><rect width="34" height="36" fill="url(#fg)"/><path d="M19 0h15v36H21c-1-5-1.500-9-1.500-13h-5C15 14 17 5 19 0z" fill="#e9edf3"/>
<path d="M19 0c-2 5-4.500 14-4.500 23h5c0 4 .5 8 1.500 13" fill="none" stroke="#223" stroke-width="1.300"/>
<path d="M7 25c5 5 15 5 21-.5" fill="none" stroke="#223" stroke-width="1.500"/><rect x="8.500" y="9" width="2" height="5.500" rx="1" fill="#124"/><rect x="25" y="9" width="2" height="5.500" rx="1" fill="#223"/></g></svg>
<svg style="position:absolute;left:27.2px;top:500px" width="67.2" height="65.6" viewBox="0 0 34 33"><rect width="34" height="33" rx="7" fill="#f4f4f6"/><circle cx="17" cy="16.500" r="12" fill="#e33b2e"/>
<path d="M17 16.500 L6.600 10.500 A12 12 0 0 0 15 28.300 L21 18z" fill="#2da44e"/><path d="M17 16.500 L15 28.300 A12 12 0 0 0 27.400 10.500 L17 10.500z" fill="#f7c02a"/>
<path d="M17 16.500L27.400 10.500A12 12 0 0 0 6.600 10.500z" fill="#e33b2e"/><circle cx="17" cy="16.500" r="5.600" fill="#fff"/><circle cx="17" cy="16.500" r="4.300" fill="#3b7de8"/></svg>
<svg style="position:absolute;left:28.4px;top:587.2px" width="66" height="67.2" viewBox="0 0 33 34"><defs><linearGradient id="mg" x1="0" y1="0" x2="0" y2="1"><stop offset="0" stop-color="#4fd964"/><stop offset="1" stop-color="#22b83c"/></linearGradient></defs><rect width="33" height="34" rx="7.500" fill="url(#mg)"/><ellipse cx="16.500" cy="15.500" rx="10" ry="8.300" fill="#e9f6ea"/><path d="M9 20l-2.500 5 6-2.500z" fill="#e9f6ea"/></svg>
<svg style="position:absolute;left:30px;top:675.6px" width="64.4" height="66" viewBox="0 0 32 33"><defs><linearGradient id="mug" x1="0" y1="0" x2="0" y2="1"><stop offset="0" stop-color="#f4445c"/><stop offset="1" stop-color="#e02440"/></linearGradient></defs><rect width="32" height="33" rx="7.500" fill="url(#mug)"/>
<path d="M12.500 10.500l11-2.500v13.200a3.200 2.700 0 1 1-2-2.500v-7.200l-7 1.600v9.600a3.200 2.700 0 1 1-2-2.500z" fill="#fff"/></svg>
<svg style="position:absolute;left:24.8px;top:759.2px" width="72.8" height="73.6" viewBox="0 0 36 36"><circle cx="18" cy="18" r="18" fill="#f6f6f8"/>
<g stroke-width="3.400" stroke-linecap="round" transform="translate(18 18) scale(0.86) translate(-18 -18)"><path d="M14.500 9v7" stroke="#36c5f0"/><path d="M9 14.500h5.500" stroke="#36c5f0"/><path d="M27 14.500h-7" stroke="#2eb67d"/><path d="M21.500 9v5.500" stroke="#2eb67d"/><path d="M21.500 27v-7" stroke="#ecb22e"/><path d="M27 21.500h-5.500" stroke="#ecb22e"/><path d="M9 21.500h7" stroke="#e01e5a"/><path d="M14.500 27v-5.500" stroke="#e01e5a"/></g></svg>
<svg style="position:absolute;left:26.4px;top:850px" width="68.8" height="68.8" viewBox="0 0 34 34"><rect x="1" y="1" width="32" height="32" rx="6.500" fill="#0b0508" stroke="#c9788a" stroke-width="1.600"/><path d="M7 8.500l3.500 3-3.500 3" fill="none" stroke="#fff" stroke-width="2.200"/><rect x="12.500" y="14" width="5.500" height="2" fill="#ddd"/></svg>
<svg style="position:absolute;left:24.8px;top:934.8px" width="70.4" height="68" viewBox="0 0 35 34"><path d="M24 1l10 4.500v23L24 33z" fill="#2a8fe0"/><path d="M24 2L4 21.500" stroke="#1f73c8" stroke-width="6.500" stroke-linecap="round"/><path d="M24 32L4 12.500" stroke="#1b64b4" stroke-width="6.500" stroke-linecap="round"/><path d="M24 9.500v15L14 17z" fill="#1a58a6"/></svg>
<svg style="position:absolute;left:32px;top:1026.8px" width="60.8" height="62.4" viewBox="0 0 30 31"><defs><linearGradient id="mag" x1="0" y1="0" x2="0" y2="1"><stop offset="0" stop-color="#27a4fb"/><stop offset="1" stop-color="#1c7cf0"/></linearGradient></defs><rect width="30" height="31" rx="7" fill="url(#mag)"/><rect x="4.500" y="9" width="21" height="13.500" rx="2" fill="#f4f6fa"/><path d="M5 10l10 7.500L25 10" fill="none" stroke="#b9c4d6" stroke-width="1.200"/></svg>
<svg style="position:absolute;left:24px;top:1110px" width="72" height="74" viewBox="0 0 36 37"><rect width="36" height="37" rx="7.500" fill="#1c1c24"/><g transform="translate(18 18.500) scale(1.15) translate(-18 -18.200)"><rect x="12" y="7" width="6" height="7.500" rx="3" fill="#f24e1e"/><rect x="18" y="7" width="6" height="7.500" rx="3" fill="#ff7262"/><rect x="12" y="14.500" width="6" height="7.500" rx="3" fill="#a259ff"/><circle cx="21" cy="18.200" r="3.500" fill="#1abcfe"/><rect x="12" y="22" width="6" height="7.500" rx="3" fill="#0acf83"/></g></svg>
<svg style="position:absolute;left:27.6px;top:1202px" width="66.8" height="67.2" viewBox="0 0 33 34"><rect width="33" height="34" rx="7.500" fill="#f2f2f5"/><ellipse cx="16.500" cy="19" rx="11.500" ry="9.500" fill="#d9d9e0"/><circle cx="11" cy="9.500" r="2.200" fill="#333"/><circle cx="17" cy="7.500" r="2.200" fill="#444"/><circle cx="8" cy="15" r="2" fill="#444"/><path d="M6 24L27 11l1.500 3L9 27z" fill="#8a5ab0"/><path d="M8 27c6 3 14 2 19-4" fill="none" stroke="#6a8" stroke-width="1.400"/></svg>
<svg style="position:absolute;left:20px;top:1284.4px" width="82" height="79.6" viewBox="0 0 41 40"><rect width="41" height="40" fill="#050505"/><rect x="8.500" y="7.500" width="23.500" height="24" fill="#f4f4f4"/><path d="M32 7.500L13 18.500l17.500 13" fill="none" stroke="#050505" stroke-width="3"/></svg>
<div style="position:absolute;left:24px;top:1385.2px;width:72px;height:2px;background:rgba(255,255,255,.12);"></div>
<svg style="position:absolute;left:32px;top:1416px" width="58.4" height="70.4" viewBox="0 0 29 35"><path d="M1.500 2.500h26L24.500 32a2.500 2.500 0 0 1-2.500 2.500H7A2.500 2.500 0 0 1 4.500 32z" fill="#d9dced" opacity=".92"/><path d="M6 6h17l-2 24H8z" fill="#c9c4c0" opacity=".55"/><ellipse cx="14.500" cy="2.800" rx="13" ry="2" fill="#eef0fa"/></svg>
<div style="position:absolute;left:11.6px;top:440.8px;width:4px;height:4px;background:#1a1f70;border-radius:50%;"></div>
<div style="position:absolute;left:11.6px;top:530px;width:4px;height:4px;background:#1a1f70;border-radius:50%;"></div>
<div style="position:absolute;left:11.6px;top:706px;width:4px;height:4px;background:#1a1f70;border-radius:50%;"></div>
<div style="position:absolute;left:11.6px;top:794px;width:4px;height:4px;background:#1a1f70;border-radius:50%;"></div>
<div style="position:absolute;left:11.6px;top:882px;width:4px;height:4px;background:#1a1f70;border-radius:50%;"></div>
<div style="position:absolute;left:11.6px;top:970px;width:4px;height:4px;background:#1a1f70;border-radius:50%;"></div>
<div style="position:absolute;left:11.6px;top:1146px;width:4px;height:4px;background:#1a1f70;border-radius:50%;"></div>
<div style="position:absolute;left:11.6px;top:1322px;width:4px;height:4px;background:#1a1f70;border-radius:50%;"></div>
</div></div></div></body></html>
